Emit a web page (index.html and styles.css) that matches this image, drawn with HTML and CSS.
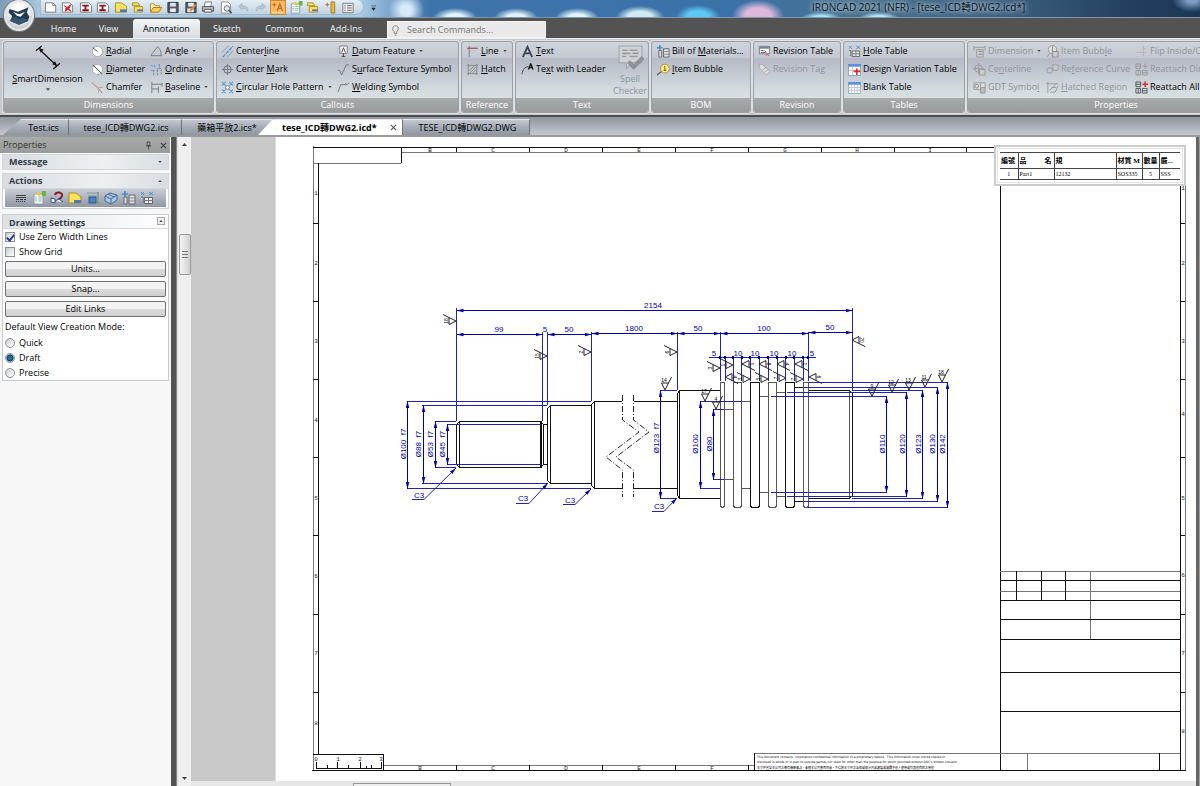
FILE: index.html
```html
<!DOCTYPE html>
<html lang="en">
<head>
<meta charset="utf-8">
<title>IRONCAD 2021 (NFR) - [tese_ICD轉DWG2.icd*]</title>
<link rel="stylesheet" href="styles.css">
</head>
<body>
<svg class="defs" aria-hidden="true">
  <defs>
    <symbol id="i-page" viewBox="0 0 14 14"><path d="M1 2h8l3 3v7H1z" fill="#fff" stroke="#777"/><path d="M9 2v3h3" fill="none" stroke="#777"/></symbol>
    <symbol id="i-pagered" viewBox="0 0 14 14"><path d="M1 2h8l3 3v7H1z" fill="#fff" stroke="#777"/><path d="M3 5l3 2 4-3-2 4 2 3-3-2-3 2 1-4z" fill="#d02030" stroke="#d02030"/></symbol>
    <symbol id="i-pagei" viewBox="0 0 14 14"><path d="M1 2h9l3 3v7H1z" fill="#fff" stroke="#777"/><path d="M3 5h7M3 10h7M6.5 5v5" stroke="#8d1020" stroke-width="2"/></symbol>
    <symbol id="i-note" viewBox="0 0 14 14"><path d="M1 2h7l5 4v6H1z" fill="#ffe15a" stroke="#a98f2c"/><path d="M6 9h7v3H6z" fill="#4878c0"/></symbol>
    <symbol id="i-noteopen" viewBox="0 0 14 14"><path d="M1 2h6l2 3H1zM3 6h9v6H3z" fill="#ffe15a" stroke="#a98f2c"/><path d="M6 9h6v2H6z" fill="#4878c0"/></symbol>
    <symbol id="i-folder" viewBox="0 0 14 14"><path d="M1 12V3h4l1 2h5v2" fill="#fff3b0" stroke="#b0892a"/><path d="M1 12l3-5h9l-3 5z" fill="#ffd34d" stroke="#a97d18"/></symbol>
    <symbol id="i-save" viewBox="0 0 14 14"><path d="M1.500 1.500h11v11h-11z" fill="#555f6b" stroke="#333"/><path d="M4 2h6v4H4z" fill="#dfe4ea"/><path d="M4 8h6v4H4z" fill="#eee"/></symbol>
    <symbol id="i-saveas" viewBox="0 0 14 14"><path d="M1.500 1.500h11v11h-11z" fill="#555f6b" stroke="#333"/><path d="M4 2h6v4H4zM3 8h7v4H3z" fill="#e8ebee"/><path d="M6 11l6-7" stroke="#e8862c" stroke-width="2"/></symbol>
    <symbol id="i-print" viewBox="0 0 14 14"><path d="M4 1h7l-1 5H3z" fill="#fff" stroke="#777"/><path d="M1 6h12v5H1z" fill="#b9bec4" stroke="#555"/><path d="M3 9h8v3H3z" fill="#eee" stroke="#555"/></symbol>
    <symbol id="i-preview" viewBox="0 0 14 14"><path d="M2 1h7l3 3v9H2z" fill="#fff" stroke="#888"/><circle cx="8" cy="8" r="3" fill="#dfeaf4" stroke="#667"/><path d="M10 10l3 3" stroke="#556" stroke-width="2"/></symbol>
    <symbol id="i-undo" viewBox="0 0 14 14"><path d="M2 6l4-4v3c5 0 7 2 6 6-1-2-3-3-6-3v2z" fill="#b9c6d0" stroke="#9fb0bc" stroke-width=".6"/></symbol>
    <symbol id="i-redo" viewBox="0 0 14 14"><path d="M12 6L8 2v3C3 5 1 7 2 11c1-2 3-3 6-3v2z" fill="#b9c6d0" stroke="#9fb0bc" stroke-width=".6"/></symbol>
    <symbol id="i-anno" viewBox="0 0 14 14"><path d="M1 4h4M3 2v4M6 11l3-8 3 8M7 8h4" fill="none" stroke="#b8692a" stroke-width="1.200"/><path d="M1 12.500h12" stroke="#fff" stroke-dasharray="2 1"/></symbol>
    <symbol id="i-props" viewBox="0 0 14 14"><path d="M2 3h9v10H2z" fill="#fff" stroke="#8a98a8"/><path d="M3 6h2M3 8h2M3 10h2M6 6h4M6 8h4M6 10h4" stroke="#8ba"/><path d="M3 2l4-1 3 3-3 1z" fill="#f0c050"/><path d="M10 0h4v5h-4z" fill="#62b845"/></symbol>
    <symbol id="i-magnet" viewBox="0 0 14 14"><path d="M5 4c1-4 8-3 7 1-1 3-3 3-4 4" fill="none" stroke="#8b1a2b" stroke-width="2"/><path d="M1 7l4 1v4l-4-1zM5 10l4-2 4 3" fill="#fff" stroke="#334a9c"/></symbol>
    <symbol id="i-frame" viewBox="0 0 14 14"><path d="M1 2h12M2 5h10M1 12h12" stroke="#8b95a0"/><path d="M3 6h7v6H3z" fill="#4b82b8" stroke="#2e5e94"/><path d="M12 1v12" stroke="#788"/></symbol>
    <symbol id="i-cube" viewBox="0 0 14 14"><path d="M1 5l5-3 7 2v5l-6 4-6-3z" fill="#a9c9ec" stroke="#49698f"/><path d="M1 5l6 3 6-4M7 8v5M4 3l6 3" fill="none" stroke="#49698f"/></symbol>
    <symbol id="i-list" viewBox="0 0 14 14"><path d="M1.500 2.500h11v10h-11z" fill="#f4f4f4" stroke="#777"/><path d="M3 5h1.500M3 7.500h1.500M3 10h1.500M6 5h5M6 7.500h5M6 10h5" stroke="#555"/></symbol>
    <symbol id="i-lines" viewBox="0 0 14 14"><path d="M2 4.500h10M2 6.500h10" stroke="#444"/><path d="M2 8.500h10" stroke="#333" stroke-dasharray="3 1"/><path d="M2 10.500h10" stroke="#333" stroke-dasharray="1 1"/></symbol>
    <symbol id="i-ruler" viewBox="0 0 14 14"><path d="M7 1h4v12H7z" fill="#eab93d" stroke="#a07b20"/><path d="M1 4h4M3 2v4" stroke="#c05a2a"/></symbol>
    <symbol id="i-smart" viewBox="0 0 28 28"><path d="M2 7l6-5M20 26l7-6M6 6l17 16" stroke="#111" stroke-width="1.300" fill="none"/><path d="M5 4l5 2-3 3zM24 23l-5-2 3-3z" fill="#111"/></symbol>
    <symbol id="i-radial" viewBox="0 0 14 14"><circle cx="7" cy="7" r="5.500" fill="#fff" stroke="#aaa"/><path d="M2 3l5 4" stroke="#444"/></symbol>
    <symbol id="i-diam" viewBox="0 0 14 14"><circle cx="7" cy="7" r="5.500" fill="#fff" stroke="#aaa"/><path d="M2 2l10 10" stroke="#555"/></symbol>
    <symbol id="i-chamfer" viewBox="0 0 14 14"><path d="M1 2l7 6 4 5" fill="none" stroke="#e06060"/><path d="M8 7h5M8 8v5" stroke="#aaa"/></symbol>
    <symbol id="i-angle" viewBox="0 0 14 14"><path d="M1 11.500h12M1 11l7-9c3 2 4 5 4 9" fill="none" stroke="#777"/></symbol>
    <symbol id="i-ord" viewBox="0 0 14 14"><path d="M1 3h2M5 2v3M10 1v4M1 8h3M7 8h2" stroke="#4d93d8"/><path d="M4 13V7M8 13V6h4v7" fill="none" stroke="#6f8096" stroke-dasharray="2 1"/></symbol>
    <symbol id="i-base" viewBox="0 0 14 14"><path d="M2 1v12M2 3.500h11M2 8.500h7M13 2v4M9 6v7" fill="none" stroke="#777"/></symbol>
    <symbol id="i-cl" viewBox="0 0 14 14"><path d="M1 8l7-7M7 13l6-7" stroke="#8a98a8"/><path d="M2 13L13 1" stroke="#4a90d0" stroke-width="1.300" stroke-dasharray="4 1"/></symbol>
    <symbol id="i-cm" viewBox="0 0 14 14"><circle cx="7" cy="7" r="4" fill="none" stroke="#666"/><path d="M7 1v12M1 7h12" stroke="#777"/></symbol>
    <symbol id="i-chp" viewBox="0 0 14 14"><path d="M1 1l4 4M5 1L1 5M9 1l4 4M13 1L9 5M1 9l4 4M5 9l-4 4M9 9l4 4M13 9l-4 4" stroke="#5b98d6" stroke-width="1.300"/><circle cx="7" cy="7" r="2" fill="#fff" stroke="#778"/></symbol>
    <symbol id="i-datum" viewBox="0 0 14 14"><path d="M3 1h8v8H3z" fill="#f7f7f7" stroke="#777"/><path d="M5 8l2-5 2 5M7 9v3M5 12.500h4" fill="none" stroke="#444"/></symbol>
    <symbol id="i-surf" viewBox="0 0 14 14"><path d="M1 8h2l2 5 5-11h3" fill="none" stroke="#777"/></symbol>
    <symbol id="i-weld" viewBox="0 0 14 14"><path d="M1 12L4 4h7l2-2M8 4l2-2" fill="none" stroke="#777"/></symbol>
    <symbol id="i-line" viewBox="0 0 14 14"><path d="M1 3.500h12M3.500 1v12" stroke="#777"/><path d="M2 3.500h10" stroke="#b05050" stroke-width="1.200"/></symbol>
    <symbol id="i-hatch" viewBox="0 0 14 14"><path d="M2.500 1v12M1 2.500h12M11.500 1v12M1 11.500h12" stroke="#888"/><path d="M4 8l5-5M4 11l7-7M7 11l4-4" stroke="#888"/></symbol>
    <symbol id="i-a" viewBox="0 0 14 14"><path d="M2 13L7 2l5 11M4 9h6" fill="none" stroke="#3c4650" stroke-width="2"/></symbol>
    <symbol id="i-leader" viewBox="0 0 14 14"><path d="M1 12c1-5 3-8 7-8" fill="none" stroke="#444"/><path d="M8 7l2.500-6L13 7M9 5h3" fill="none" stroke="#111" stroke-width="1.500"/></symbol>
    <symbol id="i-spell" viewBox="0 0 26 26"><path d="M2 2h22v16H14l-5 6v-6H2z" fill="#d0d3d6" stroke="#a0a4a8"/><path d="M5 6h5M12 6h8M5 9h8M15 9h6M5 12h4M12 12h8" stroke="#989ca0" stroke-width="1.500"/><path d="M11 17l5 5 9-9" fill="none" stroke="#8e9296" stroke-width="4"/></symbol>
    <symbol id="i-bom" viewBox="0 0 14 14"><path d="M3 0v6M0 3h6" stroke="#3f8dd0" stroke-width="1.500"/><path d="M2 6h3v7H2zM7 4h6v9H7z" fill="#dde1e5" stroke="#666"/><path d="M7 7h6M7 10h6" stroke="#888"/></symbol>
    <symbol id="i-bubble" viewBox="0 0 14 14"><path d="M0 13l5-4" stroke="#555" stroke-width="1.300"/><circle cx="8.500" cy="6" r="4.700" fill="#ffe88a" stroke="#b09038"/><path d="M7.500 4h1v4M7 8h3" fill="none" stroke="#553"/></symbol>
    <symbol id="i-rev" viewBox="0 0 14 14"><path d="M1.500 1.500h11v8h-11z" fill="#fff" stroke="#778"/><path d="M1 2h12v2H1z" fill="#7d8794"/><path d="M3 6h3M7 6l2 2M3 8h5" stroke="#555"/><path d="M8 8l4 4M12 8l-4 4" stroke="#d55"/></symbol>
    <symbol id="i-tag" viewBox="0 0 14 14"><path d="M1 1l4 1 8 7-4 4-7-7z" fill="#ddd" stroke="#aaa"/><path d="M5 7l4-2M7 10l4-3" stroke="#aaa"/></symbol>
    <symbol id="i-hole" viewBox="0 0 14 14"><path d="M1 1l3 3M4 1L1 4M9 1l4 3M13 1L9 4" stroke="#4d93d8"/><path d="M1 6h2v6M4.500 6.500h8v6h-8z" fill="#e8ecf0" stroke="#666"/><path d="M4 9.500h9M8.500 6v6" stroke="#777"/></symbol>
    <symbol id="i-dvt" viewBox="0 0 14 14"><path d="M.5 1.500h13v12H.5z" fill="#fff" stroke="#8a9ab8"/><path d="M0 1h14v3H0z" fill="#5e8fe0"/><path d="M1 8h12M5 4v9" stroke="#b8c4d8"/><path d="M6 9h7M9.500 6v7" stroke="#e02828" stroke-width="1.700"/></symbol>
    <symbol id="i-blank" viewBox="0 0 14 14"><path d="M.5 1.500h13v12H.5z" fill="#fff" stroke="#9ab"/><path d="M0 1h14v3H0z" fill="#5e8fe0"/><path d="M1 7h12M1 10h12M4 4v9M7 4v9M10 4v9" stroke="#b8c4d8"/></symbol>
    <symbol id="i-g1" viewBox="0 0 14 14"><path d="M1 1v5M13 1v5M1 2.500h12" stroke="#999" fill="none"/><path d="M4 5h7v8H4z" fill="#ccc" stroke="#999"/><path d="M6 7h4M6 10h4" stroke="#888"/></symbol>
    <symbol id="i-g2" viewBox="0 0 14 14"><circle cx="6" cy="6" r="4" fill="none" stroke="#999"/><path d="M6 0v12M0 6h12" stroke="#999"/><path d="M7 7h6v6H7z" fill="#ccc" stroke="#999"/></symbol>
    <symbol id="i-g3" viewBox="0 0 14 14"><path d="M1 2h12v7H1z" fill="#ddd" stroke="#999"/><circle cx="4" cy="5.500" r="2" fill="none" stroke="#888"/><path d="M8 2v7M8 7h5v6H8z" fill="#bbb" stroke="#999"/></symbol>
    <symbol id="i-g4" viewBox="0 0 14 14"><path d="M1 13l3-4" stroke="#999"/><circle cx="7" cy="5" r="4.500" fill="#ddd" stroke="#999"/><path d="M7 2v5h6v6H7z" fill="#ccc" stroke="#888"/></symbol>
    <symbol id="i-g5" viewBox="0 0 14 14"><circle cx="4" cy="8" r="3" fill="none" stroke="#999"/><path d="M7 2h6v6H8z" fill="#ccc" stroke="#999"/></symbol>
    <symbol id="i-g6" viewBox="0 0 14 14"><path d="M2 1v12M0 3h13M4 10l7-7M5 12h5l3-7M6 7h5" fill="none" stroke="#999"/></symbol>
    <symbol id="i-flip" viewBox="0 0 14 14"><path d="M2 8h10M9 1v3h3M9 4v9" fill="none" stroke="#aaa" stroke-dasharray="2 1"/></symbol>
    <symbol id="i-re" viewBox="0 0 14 14"><path d="M1 1h5v5H1zM1 8h5v5H1zM8 8h5v5H8zM1 3.500h5M3.500 8v5M8 10.500h5" fill="none" stroke="#555"/><path d="M8 3.500h6M11 .5v6" stroke="#e02828" stroke-width="1.600"/></symbol>
    <symbol id="i-reg" viewBox="0 0 14 14"><path d="M1 1h5v5H1zM1 8h5v5H1zM8 8h5v5H8zM1 3.500h5M3.500 8v5M8 10.500h5M8 3.500h6M11 .5v6" fill="none" stroke="#999"/></symbol>
    <symbol id="tri" viewBox="0 0 5 3"><path d="M0 0h5L2.500 3z" fill="#444"/></symbol>
    <g id="finish"><path d="M6.500 -13L0 0L-3.500 -7H3.500"/></g>
    <marker id="arr" viewBox="0 0 8 4" refX="8" refY="2" markerWidth="7" markerHeight="4" orient="auto-start-reverse" markerUnits="userSpaceOnUse"><path d="M0 0L8 2L0 4z" fill="#0000a8"/></marker>
  </defs>
</svg>

<div class="app">
  <header class="titlebar">
    <div class="qat">
      <button aria-label="New"><svg><use href="#i-page"/></svg></button>
      <button aria-label="New scene"><svg><use href="#i-pagered"/></svg></button>
      <button aria-label="New part"><svg><use href="#i-pagei"/></svg></button>
      <button aria-label="New assembly"><svg><use href="#i-pagei"/></svg></button>
      <button aria-label="New drawing"><svg><use href="#i-note"/></svg></button>
      <button aria-label="Drawing template"><svg><use href="#i-noteopen"/></svg></button>
      <button aria-label="Open"><svg><use href="#i-folder"/></svg></button>
      <button aria-label="Save"><svg><use href="#i-save"/></svg></button>
      <button aria-label="Save as"><svg><use href="#i-saveas"/></svg></button>
      <button aria-label="Print"><svg><use href="#i-print"/></svg></button>
      <button aria-label="Preview"><svg><use href="#i-preview"/></svg></button>
      <button aria-label="Undo"><svg><use href="#i-undo"/></svg></button>
      <button aria-label="Redo"><svg><use href="#i-redo"/></svg></button>
      <button class="on" aria-label="Annotation mode"><svg><use href="#i-anno"/></svg></button>
      <button aria-label="Properties"><svg><use href="#i-props"/></svg></button>
      <button aria-label="Sheet"><svg><use href="#i-noteopen"/></svg></button>
      <button aria-label="Measure"><svg><use href="#i-ruler"/></svg></button>
      <button aria-label="List"><svg><use href="#i-list"/></svg></button>
    </div>
    <button class="qat-more" aria-label="Customize"><svg viewBox="0 0 6 6"><path d="M0 .5h6M1 3h4L3 6z" fill="#222" stroke="#222" stroke-width=".6"/></svg></button>
    <h1 class="title">IRONCAD 2021 (NFR) - [tese_ICD轉DWG2.icd*]</h1>
    <button class="appbtn" aria-label="Application menu">
      <svg viewBox="0 0 30 30"><path d="M4 7l10 3 12-5-2 6 3 5-2 5-10 4-10-4 2-6-4-4z" fill="#1f3a52"/><path d="M8 10l7 3 7-3-5 6-4-1z" fill="#fff"/><path d="M4 20l7-4 4 3 5-2 6 3-11 5z" fill="#36566f"/></svg>
    </button>
  </header>

  <nav class="menubar">
    <button class="m-home">Home</button>
    <button class="m-view">View</button>
    <button class="m-anno">Annotation</button>
    <button class="m-sketch">Sketch</button>
    <button class="m-common">Common</button>
    <button class="m-add">Add-Ins</button>
    <label class="search"><svg viewBox="0 0 10 14"><path d="M3.500 9C1 7 1 2 5 2s4 5 1.500 7v2h-3zM4 13h2" fill="none" stroke="#777"/></svg><input type="text" placeholder="Search Commands..." aria-label="Search Commands"></label>
  </nav>

  <div class="ribbon">
    <section class="panel p-dim">
      <div class="body">
        <button class="big"><svg class="i28"><use href="#i-smart"/></svg><span><u>S</u>martDimension</span><svg class="dd"><use href="#tri"/></svg></button>
        <div class="col">
          <button><svg><use href="#i-radial"/></svg><span><u>R</u>adial</span></button>
          <button><svg><use href="#i-diam"/></svg><span><u>D</u>iameter</span></button>
          <button><svg><use href="#i-chamfer"/></svg><span>Chamfer</span></button>
        </div>
        <div class="col">
          <button><svg><use href="#i-angle"/></svg><span>Angle</span><svg class="dd"><use href="#tri"/></svg></button>
          <button><svg><use href="#i-ord"/></svg><span><u>O</u>rdinate</span></button>
          <button><svg><use href="#i-base"/></svg><span><u>B</u>aseline</span><svg class="dd"><use href="#tri"/></svg></button>
        </div>
      </div>
      <h2>Dimensions</h2>
    </section>
    <section class="panel p-call">
      <div class="body">
        <div class="col">
          <button><svg><use href="#i-cl"/></svg><span>Center<u>l</u>ine</span></button>
          <button><svg><use href="#i-cm"/></svg><span>Center <u>M</u>ark</span></button>
          <button><svg><use href="#i-chp"/></svg><span><u>C</u>ircular Hole Pattern</span><svg class="dd"><use href="#tri"/></svg></button>
        </div>
        <div class="col">
          <button><svg><use href="#i-datum"/></svg><span><u>D</u>atum Feature</span><svg class="dd"><use href="#tri"/></svg></button>
          <button><svg><use href="#i-surf"/></svg><span>S<u>u</u>rface Texture Symbol</span></button>
          <button><svg><use href="#i-weld"/></svg><span><u>W</u>elding Symbol</span></button>
        </div>
      </div>
      <h2>Callouts</h2>
    </section>
    <section class="panel p-ref">
      <div class="body">
        <div class="col">
          <button><svg><use href="#i-line"/></svg><span><u>L</u>ine</span><svg class="dd"><use href="#tri"/></svg></button>
          <button><svg><use href="#i-hatch"/></svg><span><u>H</u>atch</span></button>
        </div>
      </div>
      <h2>Reference</h2>
    </section>
    <section class="panel p-text">
      <div class="body">
        <div class="col">
          <button><svg><use href="#i-a"/></svg><span><u>T</u>ext</span></button>
          <button><svg><use href="#i-leader"/></svg><span>Te<u>x</u>t with Leader</span></button>
        </div>
        <button class="big" disabled><svg class="i28"><use href="#i-spell"/></svg><span>Spell<br>Checker</span></button>
      </div>
      <h2>Text</h2>
    </section>
    <section class="panel p-bom">
      <div class="body">
        <div class="col">
          <button><svg><use href="#i-bom"/></svg><span>Bill of <u>M</u>aterials...</span></button>
          <button><svg><use href="#i-bubble"/></svg><span><u>I</u>tem Bubble</span></button>
        </div>
      </div>
      <h2>BOM</h2>
    </section>
    <section class="panel p-rev">
      <div class="body">
        <div class="col">
          <button><svg><use href="#i-rev"/></svg><span>Revision Table</span></button>
          <button disabled><svg><use href="#i-tag"/></svg><span>Revision Tag</span></button>
        </div>
      </div>
      <h2>Revision</h2>
    </section>
    <section class="panel p-tab">
      <div class="body">
        <div class="col">
          <button><svg><use href="#i-hole"/></svg><span><u>H</u>ole Table</span></button>
          <button><svg><use href="#i-dvt"/></svg><span>Design Variation Table</span></button>
          <button><svg><use href="#i-blank"/></svg><span>Blank Table</span></button>
        </div>
      </div>
      <h2>Tables</h2>
    </section>
    <section class="panel p-prop">
      <div class="body">
        <div class="col">
          <button disabled><svg><use href="#i-g1"/></svg><span>Dimension</span><svg class="dd"><use href="#tri"/></svg></button>
          <button disabled><svg><use href="#i-g2"/></svg><span>Ce<u>n</u>terline</span></button>
          <button disabled><svg><use href="#i-g3"/></svg><span>GDT Symbo<u>l</u></span></button>
        </div>
        <div class="col">
          <button disabled><svg><use href="#i-g4"/></svg><span>Item Bubb<u>l</u>e</span></button>
          <button disabled><svg><use href="#i-g5"/></svg><span>Re<u>f</u>erence Curve</span></button>
          <button disabled><svg><use href="#i-g6"/></svg><span><u>H</u>atched Region</span></button>
        </div>
        <div class="col">
          <button disabled><svg><use href="#i-flip"/></svg><span>Flip Inside/Outside</span></button>
          <button disabled><svg><use href="#i-reg"/></svg><span>Reattach Dimension</span></button>
          <button><svg><use href="#i-re"/></svg><span>Reattach All</span></button>
        </div>
      </div>
      <h2>Properties</h2>
    </section>
  </div>

  <div class="doctabs">
    <button class="dt first">Test.ics</button>
    <button class="dt second">tese_ICD轉DWG2.ics</button>
    <button class="dt third">藥箱平放2.ics*</button>
    <button class="dt active"><span>tese_ICD轉DWG2.icd*</span><svg viewBox="0 0 8 8"><path d="M1 1l6 6M7 1L1 7" stroke="#555" stroke-width="1.300"/></svg></button>
    <button class="dt last">TESE_ICD轉DWG2.DWG</button>
  </div>

  <main class="work">
    <aside class="side">
      <div class="side-head"><span>Properties</span><svg viewBox="0 0 8 10"><path d="M2.500 1h3v4h-3zM1 5.500h6M4 5.500v4" fill="none" stroke="#444"/></svg><svg viewBox="0 0 8 10"><path d="M1 2l6 6M7 2L1 8" stroke="#444" stroke-width="1.400"/></svg></div>
      <button class="sec">Message<svg class="dd"><use href="#tri"/></svg></button>
      <button class="sec actions">Actions<svg class="dd up"><use href="#tri"/></svg></button>
      <div class="toolwrap"><div class="tools">
        <button aria-label="Line styles"><svg><use href="#i-lines"/></svg></button>
        <button aria-label="Sheet properties"><svg><use href="#i-props"/></svg></button>
        <button aria-label="Snap"><svg><use href="#i-magnet"/></svg></button>
        <button aria-label="New sheet"><svg><use href="#i-note"/></svg></button>
        <button aria-label="Sheet frame"><svg><use href="#i-frame"/></svg></button>
        <button aria-label="Standard views"><svg><use href="#i-cube"/></svg></button>
        <button aria-label="Bill of materials"><svg><use href="#i-bom"/></svg></button>
        <button aria-label="Hole table"><svg><use href="#i-hole"/></svg></button>
      </div></div>
      <div class="settings">
        <h3>Drawing Settings<button aria-label="Collapse"><svg class="dd up"><use href="#tri"/></svg></button></h3>
        <label><input type="checkbox" checked>Use Zero Width Lines</label>
        <label><input type="checkbox">Show Grid</label>
        <button class="btn">Units...</button>
        <button class="btn">Snap...</button>
        <button class="btn">Edit Links</button>
        <fieldset>
          <legend>Default View Creation Mode:</legend>
          <label><input type="radio" name="mode">Quick</label>
          <label><input type="radio" name="mode" checked>Draft</label>
          <label><input type="radio" name="mode">Precise</label>
        </fieldset>
      </div>
    </aside>
    <div class="splitter"></div>
    <div class="vscroll">
      <svg class="dd up"><use href="#tri"/></svg>
      <div class="thumb"></div>
      <svg class="dd"><use href="#tri"/></svg>
    </div>
    <div class="view">
      <svg class="sheet" viewBox="191 137 1005 644" preserveAspectRatio="xMinYMin meet" shape-rendering="crispEdges">
        <rect x="191" y="137" width="84" height="644" fill="#c8c8c8"/>
        <rect x="275" y="137" width="1" height="644" fill="#ddd"/>

        <g class="frame">
          <path class="mid" d="M313 146V770M401 152.500H1000M313 163.500H401M383 765.500H754M1185.500 185V770"/>
          <path d="M313 147.500H1000M401.500 147V163M318.500 163V754M312 770.500H1186M1180.500 185V770M1000.500 185V770"/>
          <path d="M456.500 147v5M529.500 147v5M602.500 147v5M675.500 147v5M748.500 147v5M821.500 147v5M894.500 147v5M966.500 147v5"/>
          <path d="M456.500 765v5M529.500 765v5M602.500 765v5M675.500 765v5M748.500 765v5"/>
          <path d="M313 223.500h5M313 301.500h5M313 379.500h5M313 457.500h5M313 535.500h5M313 614.500h5M313 692.500h5"/>
          <path d="M1180 223.500h5M1180 301.500h5M1180 379.500h5M1180 457.500h5M1180 535.500h5M1180 614.500h5M1180 692.500h5"/>
          <path class="mid" d="M1000 571.500h180M1000 591.500h180M1090.500 571v68M754 753.500h426M1027.500 753v17"/>
          <path d="M1000 580.500h180M1000 600.500h180M1000 619.500h180M1000 639.500h180M1000 672.500h180M1000 711.500h180M1016.500 571v29M1041.500 571v29M1065.500 571v29M754.500 753v17M1159.500 753v17"/>
          <path d="M313 754.500h70v16M316 768.500h66M316.500 762v6M337.500 762v6M360.500 762v6M381.500 762v6M327.500 765v3M348.500 765v3M366.500 766v2M371.500 765v3"/>
        </g>
        <g class="zones">
          <text x="430" y="152">B</text><text x="493" y="152">C</text><text x="566" y="152">D</text><text x="639" y="152">E</text><text x="712" y="152">F</text><text x="785" y="152">G</text><text x="857" y="152">H</text><text x="930" y="152">I</text>
          <text x="420" y="770">B</text><text x="493" y="770">C</text><text x="566" y="770">D</text><text x="639" y="770">E</text><text x="712" y="770">F</text>
          <text x="316" y="195">1</text><text x="316" y="265">2</text><text x="316" y="343">3</text><text x="316" y="422">4</text><text x="316" y="500">5</text><text x="316" y="578">6</text><text x="316" y="655">7</text><text x="316" y="725">8</text>
          <text x="1183" y="190">1</text><text x="1183" y="265">2</text><text x="1183" y="343">3</text><text x="1183" y="416">4</text><text x="1183" y="500">5</text><text x="1183" y="577">6</text><text x="1183" y="655">7</text><text x="1183" y="733">8</text>
          <text x="316" y="761">0</text><text x="338" y="761">1</text><text x="360" y="761">2</text><text x="381" y="761">3</text>
        </g>
        <g class="legal">
          <text x="757" y="758">This document contains  corporation confidential information of a proprietary nature.  This information must not be copied or</text>
          <text x="757" y="763">disclosed in whole or in part to outside parties nor used for other than the purpose for which provided without DSC's written consent</text>
          <text x="757" y="769">本文件包含本公司之專有機密資訊，未經本公司書面同意，不得將本文件之全部或部分內容複製或揭露予他人使用或作其他目的之用途</text>
        </g>

        <g class="part">
          <path d="M459.500 421.500H540.500L543.500 424.500V464.500L540.500 467.500H459.500L456.500 464.500V424.500ZM459.500 421V468M541.500 421V468M540.500 421V468M543 424.500H547M543 464.500H547"/>
          <path d="M591 405.500H550.500L547.500 408.500V480.500L550.500 483.500H591M550.500 405V484"/>
          <path d="M622 401.500H594.500L591.500 404.500V485.500L594.500 488.500H622M594.500 401V489M634 401.500H677M634 488.500H677"/>
          <path d="M720 390.500H679.500L677.500 393.500V495.500L679.500 498.500H720M679.500 391V498"/>
          <path class="dashdot" d="M622.500 395V420L639 432L606 457L622.500 470V497M633.500 395V420L649 432L616 457L633.500 470V497"/>
          <path class="mid" d="M720.500 382.500h4v123l-1 2h-2l-1-2zM733.500 382.500h8v123l-1 2h-6l-1-2zM768.500 382.500h8v123l-1 2h-6l-1-2zM803.500 382.500h5v123l-1 2h-3l-1-2z"/>
          <path d="M750.500 382.500h9v123l-1 2h-7l-1-2zM785.500 382.500h9v123l-1 2h-7l-1-2z"/>
          <path class="mid" d="M725 409.500h8M725 479.500h8M742 401.500h8M742 488.500h8M760 396.500h8M760 492.500h8M777 392.500h8M777 496.500h8"/>
          <path d="M795 387.500h8M795 501.500h8M809 390.500H849.500L852.500 393.500V495.500L849.500 498.500H809"/>
          <path class="mid" d="M849.500 391V498"/>
        </g>

        <g class="ext">
          <path d="M456.500 308V421M852.500 308V391M542.500 332V421M547.500 332V405M591.500 332V401M677.500 332V390M720.500 332V381M808.500 332V381"/>
          <path d="M725.500 357V381M733.500 357V381M741.500 357V381M750.500 357V381M759.500 357V381M768.500 357V381M777.500 357V381M785.500 357V381M794.500 357V381M803.500 357V381M709 357.500H816"/>
          <path d="M407 401.500H591M407 488.500H591M422 405.500H547M422 483.500H547M435 421.500H456M435 467.500H456M447 424.500H541M447 464.500H541"/>
          <path d="M660 390.500H677M660 498.500H677M700 401.500H742M700 488.500H720M713 409.500H724M713 479.500H724"/>
          <path d="M771 396.500H887M771 492.500H887M787 392.500H907M787 496.500H907M852 390.500H923M852 498.500H923M804 387.500H938M804 501.500H938M808 382.500H948M808 507.500H948"/>
        </g>
        <g class="dim">
          <path d="M456.500 310.500H852.500"/><path d="M456.500 334.500H542.500"/><path d="M547.500 334.500H591.500"/><path d="M591.500 333.500H677.500"/><path d="M677.500 333.500H720.500"/><path d="M720.500 333.500H808.500"/><path d="M808.500 332.500H852.500"/>
          <path d="M407.500 401V489"/><path d="M423.500 405V484"/><path d="M435.500 421V468"/><path d="M447.500 424V465"/>
          <path d="M660.500 390V499"/><path d="M700.500 401V489"/><path d="M713.500 409V480"/>
          <path d="M886.500 396V493"/><path d="M906.500 392V497"/><path d="M922.500 390V499"/><path d="M937.500 387V502"/><path d="M947.500 382V508"/>
        </g>
        <g class="leader">
          <path d="M412 499.500H424L456 468"/><path d="M516 503.500H529L548 483"/><path d="M563 504.500H575L591 489"/><path d="M652 511.500H664L677 498"/>
        </g>
        <g class="dots"><circle cx="720" cy="357.500" r="1.500"/><circle cx="725" cy="357.500" r="1.500"/><circle cx="733" cy="357.500" r="1.500"/><circle cx="742" cy="357.500" r="1.500"/><circle cx="750" cy="357.500" r="1.500"/><circle cx="759" cy="357.500" r="1.500"/><circle cx="768" cy="357.500" r="1.500"/><circle cx="777" cy="357.500" r="1.500"/><circle cx="786" cy="357.500" r="1.500"/><circle cx="794" cy="357.500" r="1.500"/><circle cx="803" cy="357.500" r="1.500"/><circle cx="808" cy="357.500" r="1.500"/></g>

        <g class="num">
          <text x="653" y="308">2154</text><text x="499" y="332">99</text><text x="545" y="332">5</text><text x="569" y="332">50</text><text x="634" y="331">1800</text><text x="698" y="331">50</text><text x="764" y="331">100</text><text x="830" y="330">50</text>
          <text x="714" y="356">5</text><text x="738" y="356">10</text><text x="755" y="356">10</text><text x="774" y="356">10</text><text x="792" y="356">10</text><text x="812" y="356">5</text>
          <text x="419" y="498">C3</text><text x="523" y="501">C3</text><text x="570" y="503">C3</text><text x="659" y="509">C3</text>
          <text transform="translate(406 444) rotate(-90)">Ø100&#160; f7</text>
          <text transform="translate(421 444) rotate(-90)">Ø88&#160; f7</text>
          <text transform="translate(433 444) rotate(-90)">Ø53&#160; f7</text>
          <text transform="translate(445 444) rotate(-90)">Ø45&#160; f7</text>
          <text transform="translate(659 438) rotate(-90)">Ø123&#160; f7</text>
          <text transform="translate(698 444) rotate(-90)">Ø100</text>
          <text transform="translate(712 444) rotate(-90)">Ø80</text>
          <text transform="translate(885 444) rotate(-90)">Ø110</text>
          <text transform="translate(905 444) rotate(-90)">Ø120</text>
          <text transform="translate(921 444) rotate(-90)">Ø123</text>
          <text transform="translate(935 444) rotate(-90)">Ø130</text>
          <text transform="translate(945 444) rotate(-90)">Ø142</text>
        </g>

        <g class="marks">
          <g transform="translate(665 390)"><use href="#finish"/><text x="-1" y="-8">14</text></g>
          <g transform="translate(705 401)"><use href="#finish"/><text x="-1" y="-8">17</text></g>
          <g transform="translate(716 409)"><use href="#finish"/><text x="0" y="-8">4</text></g>
          <g transform="translate(872 396)"><use href="#finish"/><text x="0" y="-8">9</text></g>
          <g transform="translate(892 392)"><use href="#finish"/><text x="-1" y="-8">12</text></g>
          <g transform="translate(909 390)"><use href="#finish"/><text x="-1" y="-8">13</text></g>
          <g transform="translate(925 387)"><use href="#finish"/><text x="-1" y="-8">11</text></g>
          <g transform="translate(942 382)"><use href="#finish"/><text x="-1" y="-8">18</text></g>
          <g transform="translate(456 321) rotate(-90)"><use href="#finish"/><text y="-8">18</text></g>
          <g transform="translate(547 356) rotate(-90)"><use href="#finish"/><text y="-8">15</text></g>
          <g transform="translate(591 352) rotate(-90)"><use href="#finish"/><text y="-8">2</text></g>
          <g transform="translate(677 352) rotate(-90)"><use href="#finish"/><text y="-8">6</text></g>
          <g transform="translate(720 368) rotate(-90)"><use href="#finish"/><text y="-8">3</text></g>
          <g transform="translate(733 365) rotate(-90)"><use href="#finish"/><text y="-8">1</text></g>
          <g transform="translate(750 379) rotate(-90)"><use href="#finish"/><text y="-8">3</text></g>
          <g transform="translate(768 379) rotate(-90)"><use href="#finish"/><text y="-8">5</text></g>
          <g transform="translate(786 378) rotate(-90)"><use href="#finish"/><text y="-8">7</text></g>
          <g transform="translate(803 379) rotate(-90)"><use href="#finish"/><text y="-8">7</text></g>
          <g transform="translate(852 340) rotate(90)"><use href="#finish"/><text y="-8">20</text></g>
          <g transform="translate(742 364) rotate(90)"><use href="#finish"/><text y="-8">1</text></g>
          <g transform="translate(759 364) rotate(90)"><use href="#finish"/><text y="-8">8</text></g>
          <g transform="translate(777 364) rotate(90)"><use href="#finish"/><text y="-8">4</text></g>
          <g transform="translate(795 364) rotate(90)"><use href="#finish"/><text y="-8">1</text></g>
          <g transform="translate(725 377) rotate(90)"><use href="#finish"/><text y="-8">4</text></g>
          <g transform="translate(809 377) rotate(90)"><use href="#finish"/><text y="-8">6</text></g>
        </g>

        <foreignObject x="994" y="145" width="192" height="41">
          <div class="bomframe">
            <table class="bom">
              <colgroup><col class="c1"><col class="c2"><col class="c3"><col class="c4"><col class="c5"><col class="c6"></colgroup>
              <tr><th>編號</th><th class="spread"><span>品</span><span>名</span></th><th>規</th><th>材質 M</th><th>數量</th><th>嚴...</th></tr>
              <tr><td class="ctr">1</td><td>Part1</td><td>12132</td><td>SOS335</td><td class="ctr">5</td><td>SSS</td></tr>
            </table>
          </div>
        </foreignObject>
      </svg>
      <div class="hscroll"><div class="hthumb"></div></div>
    </div>
    <div class="edge"></div>
  </main>
</div>
</body>
</html>
```

FILE: styles.css
```css
* { box-sizing: border-box; }
body, h1, h2, h3, fieldset, legend { margin: 0; padding: 0; border: 0; font-size: inherit; font-weight: normal; }
body { font: 9px/14px "Open Sans", "Noto Sans CJK TC", sans-serif; color: #000; background: #c8c8c8; }
button { font: inherit; color: inherit; background: none; border: 0; padding: 0; margin: 0; text-align: left; white-space: nowrap; }
svg { display: block; flex: none; }
.defs { position: absolute; width: 0; height: 0; }
.app { height: 100vh; display: flex; flex-direction: column; overflow: hidden; }

.titlebar {
  position: relative; z-index: 2; flex: none; height: 18px; display: flex; align-items: flex-start; padding-left: 40px;
  border-bottom: 1px solid #7e98ae;
  background:
    radial-gradient(circle at 406px 10px, #d8ebfa 0 5px, transparent 18px),
    radial-gradient(ellipse 22px 10px at 455px 18px, #dff4fb 40%, transparent),
    radial-gradient(ellipse 22px 10px at 516px 18px, #dff4fb 40%, transparent),
    radial-gradient(ellipse 22px 10px at 577px 18px, #dff4fb 40%, transparent),
    radial-gradient(ellipse 24px 11px at 640px 17px, #cfeaf0 50%, transparent),
    radial-gradient(ellipse 22px 12px at 698px 17px, #5cc8f5 50%, transparent),
    radial-gradient(ellipse 26px 16px at 758px 16px, #dcb8dc 50%, transparent),
    radial-gradient(ellipse 20px 6px at 821px 18px, #a8e4fa 40%, transparent),
    radial-gradient(ellipse 20px 6px at 879px 18px, #b8e4fa 40%, transparent),
    radial-gradient(ellipse 20px 12px at 1192px 0, #7da0c4 20%, transparent),
    linear-gradient(90deg, #7f9cb8 0, #a9c6dd 40px, #a9cbe6 360px, #3f74ab 430px, #3a72a8 740px, #49728f 850px, #3d6180 1000px, #22405e 1130px, #1c3756 1200px);
}
.qat { width: 324px; height: 15px; display: flex; align-items: center; justify-content: space-between; padding: 0 8px 0 3px; border-radius: 0 10px 12px 0; background: linear-gradient(#e4eef5, #c0d3e2); border: 1px solid #a3b8ca; border-top: 0; }
.qat svg { width: 14px; height: 13px; }
.qat .on { background: #f9b95c; outline: 1px solid #c98a3a; }
.qat-more { margin: 5px 0 0 7px; }
.qat-more svg { width: 5px; height: 6px; }
.title { position: absolute; left: 812px; top: 0; font-size: 10px; line-height: 14px; color: #0c1420; white-space: nowrap; text-shadow: 0 0 4px #c8d8e6, 0 0 6px #c8d8e6; }
.appbtn { position: absolute; left: 4px; top: 0; width: 30px; height: 31px; border-radius: 50%; background: radial-gradient(circle at 50% 35%, #fff 30%, #c9ced3 75%); border: 2px solid #e5e8ea; box-shadow: 0 0 0 1px #777; }
.appbtn svg { width: 26px; height: 26px; }

.menubar { flex: none; height: 20px; display: flex; align-items: flex-end; padding-left: 43px; background: #535353; color: #f4f4f4; }
.menubar button { height: 19px; text-align: center; }
.m-home { width: 41px; } .m-view { width: 49px; } .m-anno { width: 67px; } .m-sketch { width: 54px; } .m-common { width: 61px; } .m-add { width: 62px; }
.menubar .m-anno { color: #000; background: linear-gradient(#f2f4f6, #d9dde2); border-radius: 3px 3px 0 0; }
.search { display: flex; align-items: center; width: 159px; height: 17px; margin: 0 0 0 10px; background: #e9e9e9; border: 1px solid #f4f4f4; }
.search svg { width: 9px; height: 12px; margin-left: 3px; }
.search input { flex: 1; min-width: 0; border: 0; background: none; font: inherit; padding: 0 0 0 7px; outline: 0; }
.search input::placeholder { color: #777; opacity: 1; }

.ribbon { flex: none; height: 79px; display: flex; gap: 2px; padding: 2px 0 2px 3px; overflow: hidden; background: #c5c8cc; border-bottom: 2px solid #4d4d4d; border-top: 1px solid #eee; }
.panel { flex: none; display: flex; flex-direction: column; border: 1px solid #9ba0a6; border-radius: 3px; background: linear-gradient(#cfd3da 0, #c4c9d2 22%, #b5bac6 24%, #d2d9dd 65%, #e2e9e9 100%); box-shadow: 0 0 0 1px #dfe2e5; overflow: hidden; }
.body { flex: 1; display: grid; align-content: start; }
.panel h2 { height: 14px; line-height: 14px; text-align: center; color: #fff; background: linear-gradient(#a8abac, #989b9b); }
.col { display: flex; flex-direction: column; align-items: flex-start; }
.col button { display: flex; align-items: center; height: 18px; gap: 2px; }
.col button svg { width: 13px; height: 13px; }
.dd { width: 5px; height: 3px; }
.col button .dd { width: 4px; height: 2px; margin-left: 2px; }
.up { transform: rotate(180deg); }
.panel button:disabled { color: #90949a; }
.big { display: flex; flex-direction: column; align-items: center; text-align: center; line-height: 12px; padding-top: 2px; }
.big .i28 { width: 27px; height: 27px; margin-bottom: 2px; }
.big .dd { width: 4px; margin-top: 3px; }
.p-dim { width: 211px; } .p-dim .body { grid-template-columns: 87px 59px auto; }
.p-call { width: 243px; } .p-call .body { grid-template-columns: 116px auto; padding-left: 4px; }
.p-ref { width: 52px; } .p-ref .body { padding-left: 4px; }
.p-text { width: 134px; } .p-text .body { grid-template-columns: 90px 38px; padding-left: 5px; }
.p-bom { width: 100px; } .p-bom .body { padding-left: 5px; }
.p-rev { width: 88px; } .p-rev .body { padding-left: 4px; }
.p-tab { width: 122px; } .p-tab .body { padding-left: 4px; }
.p-prop { width: 298px; } .p-prop .body { grid-template-columns: 73px 89px auto; padding-left: 5px; }

.doctabs { flex: none; height: 20px; display: flex; align-items: flex-end; padding-left: 3px; background: linear-gradient(#8f949e, #c3c7d0); border-bottom: 2px solid #9a9a9a; }
.dt { height: 16px; line-height: 15px; text-align: center; background: linear-gradient(#c3c8cf, #a4abb5 50%, #8f97a3); border-right: 1px solid #6c737d; border-top: 1px solid #e4e6e9; }
.first { width: 66px; padding-left: 16px; clip-path: polygon(18px 0, 100% 0, 100% 100%, 0 100%); }
.second { width: 113px; padding-left: 2px; }
.third { width: 90px; border-right: 0; }
.active { width: 145px; margin-left: -14px; display: flex; align-items: center; gap: 13px; padding-left: 24px; font-weight: bold; background: #fff; clip-path: polygon(15px 0, 100% 0, 100% 100%, 0 100%); }
.active svg { width: 7px; height: 7px; }
.last { width: 127px; padding-left: 3px; }

.work { flex: 1; min-height: 0; display: flex; }
.side { flex: none; width: 171px; display: flex; flex-direction: column; background: #f7f7f7; padding-right: 2px; }
.side-head { height: 16px; display: flex; align-items: center; gap: 8px; padding: 0 3px; margin-right: -1px; color: #333; background: linear-gradient(#a9abab, #9a9c9c); }
.side-head span { flex: 1; }
.side-head svg { width: 7px; height: 9px; }
.sec { display: flex; align-items: center; justify-content: space-between; height: 16px; margin: 1px 0 0 2px; padding: 0 6px 0 6px; font-weight: bold; color: #333c46; border: 1px solid #d3d6da; background: linear-gradient(90deg, #d8dce2, #eef0f2 60%, #d9dde2); }
.sec .dd { width: 4px; height: 2px; }
.actions { margin-top: 3px; }
.toolwrap { margin-left: 2px; padding: 0 2px 1px; border: 1px solid #cdd1d6; border-top: 0; background: #fff; }
.tools { display: flex; gap: 4px; height: 18px; align-items: center; padding-left: 9px; background: linear-gradient(#c9cdd4, #8f97a3); }
.tools svg { width: 14px; height: 14px; }
.settings { margin: 5px 0 0 2px; padding: 0 2px; border: 1px solid #c6cbd0; background: #fff; display: flex; flex-direction: column; }
.settings h3 { height: 14px; line-height: 15px; margin: 0 -2px; padding: 0 3px 0 6px; display: flex; justify-content: space-between; font-weight: bold; color: #333c46; border-bottom: 1px solid #d4d8dc; background: linear-gradient(90deg, #dde1e6, #fff); }
.settings h3 button { width: 8px; height: 8px; margin-top: 2px; border: 1px solid #aaa; background: #eee; display: grid; place-items: center; }
.settings h3 .dd { width: 4px; height: 2px; }
.settings label { display: flex; align-items: center; gap: 4px; height: 15px; }
.settings input { appearance: none; width: 10px; height: 10px; margin: 0; border: 1px solid #8b9096; background: linear-gradient(135deg, #ccc, #fff); }
.settings input[type=checkbox]:checked::after { content: ""; display: block; width: 3px; height: 6px; margin: 0 0 0 2px; border: solid #2c3f9c; border-width: 0 2px 2px 0; transform: rotate(40deg); }
.settings input[type=radio] { border-radius: 50%; }
.settings input[type=radio]:checked { background: radial-gradient(circle, #1b6f9e 0 2px, #14354f 3px, #dfe6ea 4px); }
.btn { height: 16px; margin: 2px 0; line-height: 14px; text-align: center; border: 1px solid #707070; border-radius: 2px; background: linear-gradient(#f3f3f3 50%, #dcdcdc 50%, #d0d0d0); }
.settings legend { line-height: 16px; }
.splitter { flex: none; width: 6px; background: #535353; border-right: 1px solid #888; }
.vscroll { flex: none; width: 14px; display: flex; flex-direction: column; align-items: center; padding: 6px 0; background: #efefef; border-left: 1px solid #ddd; }
.thumb { width: 12px; height: 41px; margin: 88px 0 auto; border: 1px solid #999; border-radius: 2px; background: repeating-linear-gradient(#777 0 1px, transparent 1px 3px) center / 6px 7px no-repeat, linear-gradient(90deg, #f5f5f5, #d0d0d4); }
.view { flex: 1; min-width: 0; display: flex; flex-direction: column; background: #fff; }
.sheet { flex: 1; min-height: 0; width: 100%; }
.hscroll { flex: none; height: 5px; background: #e6e6e6; padding: 2px 0 0 162px; }
.hthumb { width: 98px; height: 6px; border: 1px solid #999; background: #eee; }
.edge { flex: none; width: 4px; background: linear-gradient(90deg, #636363 60%, #bbb); }

.frame path { fill: none; stroke: #111; }
.frame .mid { stroke: #777; }
.zones text { font: 6px "Liberation Mono", monospace; text-anchor: middle; fill: #222; }
.legal text { font: 3px "DejaVu Sans", "Noto Sans CJK TC", sans-serif; fill: #000; white-space: pre; }
.part path { fill: none; stroke: #111; }
.part .mid { stroke: #555; }
.part .dashdot { stroke: #222; stroke-dasharray: 6 2 1 2; shape-rendering: auto; }
.ext path { stroke: #2222b4; fill: none; }
.dim path { stroke: #0000a8; marker-start: url(#arr); marker-end: url(#arr); }
.leader path { fill: none; stroke: #2222b4; shape-rendering: auto; marker-end: url(#arr); }
.dots circle { fill: #0000a8; }
.num text { font: 8px "Liberation Sans", Arial, sans-serif; fill: #0000a8; text-anchor: middle; }
.marks { fill: none; stroke: #222; shape-rendering: auto; }
.marks text { font: 5px "Liberation Sans", Arial, sans-serif; text-anchor: middle; fill: #000; stroke: none; }

.bomframe { height: 41px; padding: 5px 4px; background: #fff; border: 2px solid #ccc; outline: 1px solid #e2e2e2; outline-offset: -4px; }
.bom { width: 180px; height: 28px; table-layout: fixed; border-collapse: collapse; font: 6px/8px "Liberation Serif", "Noto Sans CJK TC", serif; }
.bom th, .bom td { padding: 0 1px; border: 1px solid #444; text-align: left; white-space: nowrap; overflow: hidden; }
.bom th { font-weight: bold; height: 16px; font-size: 7px; }
.bom tr > :first-child { border-left: 0; }
.bom tr > :last-child { border-right: 0; }
.bom .ctr { text-align: center; }
.spread span { display: inline-block; width: 25px; }
.spread span + span { width: 8px; }
.c1 { width: 18px; } .c2 { width: 36px; } .c3 { width: 62px; } .c4 { width: 26px; } .c5 { width: 17px; } .c6 { width: 21px; }
```
